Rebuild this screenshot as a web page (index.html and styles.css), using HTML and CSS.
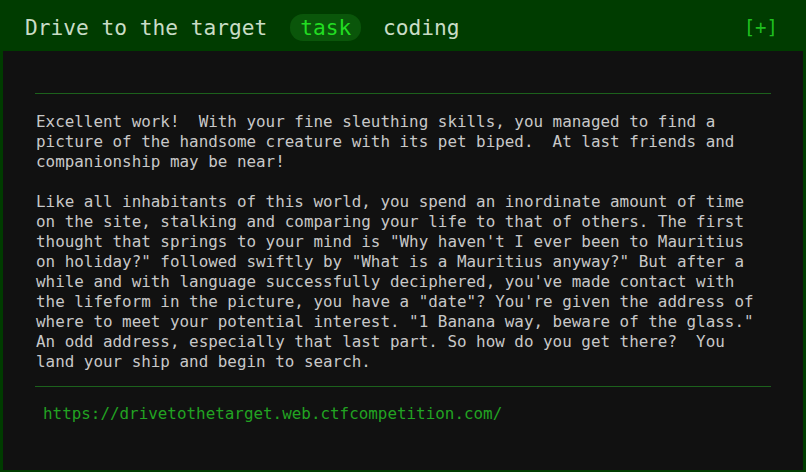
FILE: index.html
```html
<!DOCTYPE html>
<html>
<head>
<meta charset="utf-8">
<link rel="stylesheet" href="styles.css">
</head>
<body>
<div class="card">
  <div class="head">
    <div class="title">Drive to the target <span class="tag">task</span> coding</div>
    <div class="toggle">[+]</div>
  </div>
  <div class="panel">
    <hr class="rule">
    <div class="desc"><p>Excellent work!  With your fine sleuthing skills, you managed to find a picture of the handsome creature with its pet biped.  At last friends and companionship may be near!</p><p>Like all inhabitants of this world, you spend an inordinate amount of time on the site, stalking and comparing your life to that of others. The first thought that springs to your mind is "Why haven't I ever been to Mauritius on holiday?" followed swiftly by "What is a Mauritius anyway?" But after a while and with language successfully deciphered, you've made contact with the lifeform in the picture, you have a "date"? You're given the address of where to meet your potential interest. "1 Banana way, beware of the glass." An odd address, especially that last part. So how do you get there?  You land your ship and begin to search.</p></div>
    <hr class="rule">
    <div class="link">https://drivetothetarget.web.ctfcompetition.com/</div>
  </div>
</div>
</body>
</html>
```
FILE: styles.css
```css
html, body {
  margin: 0;
  padding: 0;
  background: #003c00;
}
.card {
  width: 806px;
  height: 472px;
  box-sizing: border-box;
  padding: 0 3px 2px 3px;
  display: flex;
  flex-direction: column;
  font-family: "DejaVu Sans Mono", "Liberation Mono", monospace;
}
.head {
  height: 51px;
  display: flex;
  align-items: center;
  justify-content: space-between;
  padding: 3px 25px 0 22px;
  box-sizing: border-box;
}
.title {
  font-size: 21.2px;
  color: #c9dcc6;
  line-height: 26px;
}
.tag {
  display: inline-block;
  background: #0a560a;
  color: #22dd22;
  border-radius: 13px;
  padding: 0 10px;
  margin: 0 9px 0 10px;
  line-height: 27px;
}
.toggle {
  font-size: 19px;
  color: #1fbf1f;
  line-height: 24px;
}
.panel {
  flex: 1;
  background: #111111;
  padding: 42px 32px 0 32px;
}
.rule {
  border: 0;
  border-top: 1px solid #1c611c;
  margin: 0;
  height: 0;
}
.desc {
  padding: 18px 0 14px 1px;
  font-size: 15.9px;
  line-height: 20px;
  color: #c8c8c8;
  white-space: pre-wrap;
}
.desc p {
  margin: 0 0 20px 0;
}
.desc p:last-child {
  margin: 0;
}
.link {
  padding: 17px 0 0 8px;
  font-size: 15.9px;
  line-height: 20px;
  color: #22a322;
}
```
